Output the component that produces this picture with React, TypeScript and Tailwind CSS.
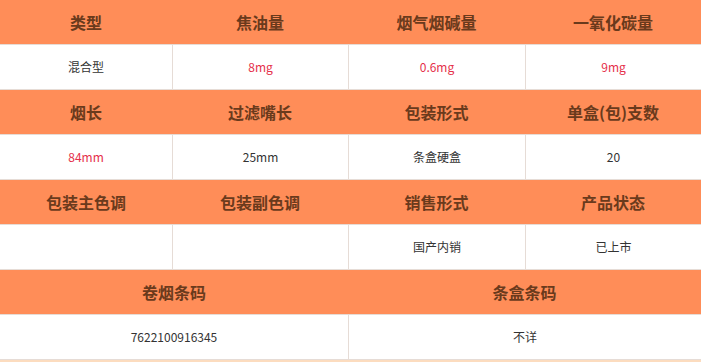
const groups: { cols: number; heads: string[]; cells: { text: string; red?: boolean }[] }[] = [
  {
    cols: 4,
    heads: ['类型', '焦油量', '烟气烟碱量', '一氧化碳量'],
    cells: [{ text: '混合型' }, { text: '8mg', red: true }, { text: '0.6mg', red: true }, { text: '9mg', red: true }],
  },
  {
    cols: 4,
    heads: ['烟长', '过滤嘴长', '包装形式', '单盒(包)支数'],
    cells: [{ text: '84mm', red: true }, { text: '25mm' }, { text: '条盒硬盒' }, { text: '20' }],
  },
  {
    cols: 4,
    heads: ['包装主色调', '包装副色调', '销售形式', '产品状态'],
    cells: [{ text: '' }, { text: '' }, { text: '国产内销' }, { text: '已上市' }],
  },
  {
    cols: 2,
    heads: ['卷烟条码', '条盒条码'],
    cells: [{ text: '7622100916345' }, { text: '不详' }],
  },
];

export default function App() {
  return (
    <div
      className="w-[701px] bg-white border-b-2 border-[#fcdcbf]"
      style={{ fontFamily: '"Noto Sans CJK SC", "Noto Sans", sans-serif' }}
    >
      {groups.map((g, i) => {
        const cols = g.cols === 4 ? 'grid grid-cols-[172px_176px_177px_1fr]' : 'grid grid-cols-[348px_1fr]';
        return (
          <div key={i}>
            <div className={cols + ' h-[44px] bg-[#ff8d58]'}>
              {g.heads.map((h) => (
                <div key={h} className="flex items-center justify-center text-[16px] font-semibold text-[#6a3a1c]">
                  {h}
                </div>
              ))}
            </div>
            <div className={cols + ' h-[46px] border-y border-[#e6dcd6]'}>
              {g.cells.map((c, j) => (
                <div
                  key={j}
                  className={
                    'flex items-center justify-center text-[12px] ' +
                    (j > 0 ? 'border-l border-[#e6dcd6] ' : '') +
                    (c.red ? 'text-[#e5304a]' : 'text-[#333333]')
                  }
                >
                  {c.text}
                </div>
              ))}
            </div>
          </div>
        );
      })}
    </div>
  );
}
